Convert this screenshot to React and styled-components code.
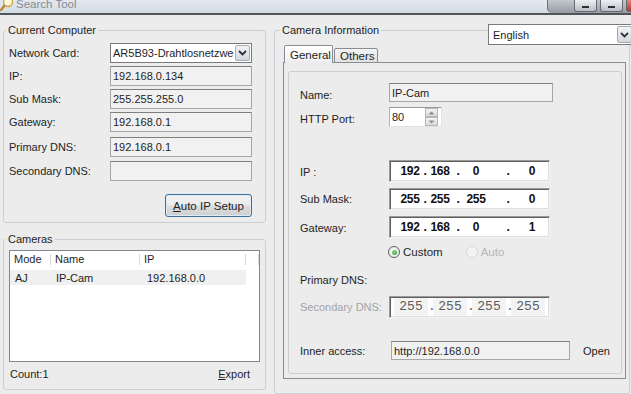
import React from "react"
import styled, { createGlobalStyle } from "styled-components"

const GlobalStyle = createGlobalStyle`
  html, body {
    margin: 0;
    padding: 0;
  }
  body {
    width: 631px;
    height: 394px;
    overflow: hidden;
    background: #ececec;
    font-family: "Liberation Sans", Arial, sans-serif;
    font-size: 11px;
    color: #1e1e1e;
  }
`

const Window = styled.div`
  position: relative;
  width: 631px;
  height: 394px;
  display: flex;
  flex-direction: column;
  background: #ececec;
  overflow: hidden;
`

const TitleBar = styled.div`
  flex: none;
  height: 13px;
  display: flex;
  align-items: flex-start;
  background: linear-gradient(#e4e9ef, #d3dbe4);
  border-bottom: 2px solid #505459;
  overflow: hidden;
`

const TitleIcon = styled.svg`
  flex: none;
  width: 14px;
  height: 12px;
  margin-right: 2px;
`

const TitleText = styled.span`
  margin-top: -2px;
  font-size: 11.5px;
  line-height: 12px;
  color: #848b93;
`

const Spacer = styled.div`
  flex: 1;
`

const CaptionTray = styled.div`
  flex: none;
  width: 84px;
  height: 13px;
  box-sizing: border-box;
  padding-left: 26px;
  display: flex;
  gap: 3px;
  background: linear-gradient(#c4c8cd, #959ba2);
  border-left: 1px solid #6e737a;
  border-bottom-left-radius: 5px;
`

const CaptionButton = styled.div`
  flex: none;
  box-sizing: border-box;
  width: ${p => p.$w}px;
  height: 12px;
  display: flex;
  align-items: flex-end;
  justify-content: center;
  padding-bottom: 3px;
  border: 1px solid #666b72;
  border-top: none;
  border-radius: 0 0 3px 3px;
  background: ${p => p.$close
    ? "linear-gradient(#d98a80, #b8382c)"
    : "linear-gradient(#eef0f2, #b9bec5)"};
`

const Dash = styled.div`
  width: 7px;
  height: 2px;
  background: #2c2f33;
`

const Body = styled.div`
  flex: 1;
  display: flex;
  gap: 8px;
  padding: 9px 0 0 3px;
`

const LeftColumn = styled.div`
  width: 263px;
  display: flex;
  flex-direction: column;
  gap: 10px;
`

const Group = styled.fieldset`
  margin: 0;
  min-width: 0;
  box-sizing: border-box;
  width: ${p => p.$w}px;
  border: 1px solid #c9cfd5;
  border-radius: 3px;
  padding: ${p => p.$pad};
  position: relative;
`

const Legend = styled.legend`
  margin-left: -3px;
  padding: 0 2px;
  font-size: 11px;
  line-height: 13px;
`

const Row = styled.div`
  display: flex;
  align-items: center;
  height: ${p => p.$h || 20}px;
  margin-top: ${p => p.$mt || 0}px;
`

const Label = styled.div`
  flex: none;
  width: ${p => p.$w}px;
  padding-top: ${p => p.$dy || 0}px;
  color: ${p => (p.$muted ? "#a3a3a3" : "#1e1e1e")};
  white-space: nowrap;
`

const TextBox = styled.div`
  flex: none;
  box-sizing: border-box;
  width: ${p => p.$w}px;
  height: ${p => p.$h || 20}px;
  margin-left: ${p => p.$ml || 0}px;
  padding-left: 2px;
  display: flex;
  align-items: center;
  background: #f1f1f1;
  border: 1px solid #a6a6a6;
  border-top-color: #7e7e7e;
  white-space: nowrap;
  overflow: hidden;
`

const Combo = styled.div`
  flex: none;
  box-sizing: border-box;
  width: ${p => p.$w}px;
  height: ${p => p.$h || 20}px;
  display: flex;
  align-items: stretch;
  background: #fff;
  border: 1px solid #7a7a7a;
`

const ComboText = styled.div`
  flex: 1;
  min-width: 0;
  display: flex;
  align-items: center;
  padding-left: ${p => p.$pl || 2}px;
  white-space: nowrap;
  overflow: hidden;
`

const ComboButton = styled.div`
  flex: none;
  width: 15px;
  margin: 1px;
  display: flex;
  align-items: center;
  justify-content: center;
  box-sizing: border-box;
  border: 1px solid #a7adb5;
  border-radius: 2px;
  background: linear-gradient(#f1f3f5, #d4d8de);
`

const LanguageCombo = styled(Combo)`
  position: absolute;
  top: -13px;
  left: 213px;
`

const PushButton = styled.div`
  box-sizing: border-box;
  width: 87px;
  height: 23px;
  margin: 13px 0 0 156px;
  display: flex;
  align-items: center;
  justify-content: center;
  border: 1px solid #3d6f99;
  border-radius: 3px;
  box-shadow: inset 0 0 0 1px #d7ecf8;
  background: linear-gradient(#f3f3f3 0%, #ebebeb 48%, #dcdcdc 52%, #cfcfcf 100%);
  font-size: 11.5px;
`

const ListBox = styled.div`
  box-sizing: border-box;
  width: 251px;
  height: 112px;
  background: #fff;
  border: 1px solid #828790;
`

const ListHeader = styled.div`
  display: flex;
  align-items: center;
  height: 17px;
`

const HeaderCell = styled.div`
  flex: none;
  box-sizing: border-box;
  width: ${p => p.$w}px;
  height: 11px;
  line-height: 11px;
  padding-left: ${p => p.$pl || 4}px;
  border-right: 1px solid #d9d9d9;
  white-space: nowrap;
`

const ListRow = styled.div`
  display: flex;
  align-items: center;
  width: 236px;
  height: 15px;
  margin-top: 2px;
  background: #f0f0f0;
`

const ListCell = styled.div`
  flex: none;
  box-sizing: border-box;
  width: ${p => p.$w}px;
  padding-left: ${p => p.$pl}px;
  white-space: nowrap;
`

const Footer = styled.div`
  display: flex;
  align-items: center;
  justify-content: space-between;
  height: 24px;
  padding: 0 11px 0 1px;
`

const Underline = styled.span`
  text-decoration: underline;
  text-underline-offset: 1px;
`

const Tabs = styled.div`
  display: flex;
  align-items: flex-end;
  height: 17px;
  margin-left: 1px;
  margin-bottom: -1px;
  position: relative;
  z-index: 1;
`

const Tab = styled.div`
  box-sizing: border-box;
  width: ${p => p.$w}px;
  height: ${p => (p.$active ? 18 : 15)}px;
  display: flex;
  align-items: center;
  padding-left: ${p => p.$pl}px;
  border: 1px solid #898c95;
  border-bottom: ${p => (p.$active ? "none" : "1px solid #898c95")};
  border-radius: 2px 2px 0 0;
  background: ${p => (p.$active
    ? "linear-gradient(#ffffff 0%, #f6f6f6 70%, #ececec 100%)"
    : "linear-gradient(#f4f4f4, #e1e1e1)")};
  margin-left: ${p => (p.$active ? 0 : 1)}px;
  font-size: 11.5px;
`

const TabPanel = styled.div`
  box-sizing: border-box;
  height: 317px;
  padding: 8px 3px 4px 4px;
  border: 1px solid #898c95;
  background: #ececec;
`

const InnerBox = styled.div`
  box-sizing: border-box;
  height: 100%;
  padding: 11px 0 0 11px;
  border: 1px solid #cdcdcd;
  border-radius: 3px;
`

const Spinner = styled.div`
  flex: none;
  box-sizing: border-box;
  width: 53px;
  height: 20px;
  display: flex;
  align-items: center;
  background: #fff;
  border: 1px solid #e2e2e2;
  border-top-color: #9a9a9a;
  border-left-color: #b3b3b3;
  padding-left: 2px;
`

const SpinText = styled.div`
  flex: 1;
`

const SpinButtons = styled.div`
  flex: none;
  width: 13px;
  height: 18px;
  margin-right: 3px;
  display: flex;
  flex-direction: column;
`

const SpinHalf = styled.div`
  flex: 1;
  display: flex;
  align-items: center;
  justify-content: center;
  box-sizing: border-box;
  border: 1px solid #b4b7bb;
  background: linear-gradient(#f3f3f3, #dadada);
`

const IpBox = styled.div`
  flex: none;
  box-sizing: border-box;
  width: 161px;
  height: 22px;
  display: flex;
  align-items: center;
  padding-left: ${p => p.$pl}px;
  background: #fff;
  border: 1px solid;
  border-color: #9a9a9a #f4f4f4 #f4f4f4 #9a9a9a;
  box-shadow: inset 1px 1px 0 #5f5f5f, inset -1px -1px 0 #dedede;
`

const Octet = styled.span`
  flex: none;
  width: ${p => p.$w}px;
  text-align: center;
  font-family: "Liberation Sans", Arial, sans-serif;
  font-weight: bold;
  font-size: 12px;
  letter-spacing: -0.4px;
  color: #111;
  white-space: pre;
`

const DimOctet = styled.span`
  flex: none;
  width: ${p => p.$w}px;
  height: 18px;
  line-height: 18px;
  text-align: center;
  font-family: "Liberation Mono", "Courier New", monospace;
  font-size: 13px;
  color: #5c5c5c;
  background: ${p => (p.$dot ? "#fff" : "#f3f3f3")};
`

const RadioItem = styled.div`
  display: flex;
  align-items: center;
  gap: 3px;
  margin-left: ${p => p.$ml || 0}px;
  color: ${p => (p.$disabled ? "#b5b5b5" : "#1e1e1e")};
  font-size: 11.5px;
`

const RadioCircle = styled.div`
  box-sizing: border-box;
  width: 12px;
  height: 12px;
  border-radius: 50%;
  display: flex;
  align-items: center;
  justify-content: center;
  border: 1px solid ${p => (p.$disabled ? "#dadada" : "#5c5f63")};
  background: ${p => (p.$disabled ? "#f3f3f3" : "radial-gradient(#ffffff, #e4e4e4)")};
`

const RadioDot = styled.div`
  width: 5px;
  height: 5px;
  border-radius: 50%;
  background: radial-gradient(circle at 40% 40%, #8ee08e, #2b8a2b);
`

const OpenLink = styled.span`
  margin-left: 13px;
`

function Chevron() {
  return (
    <svg width="9" height="6" viewBox="0 0 9 6">
      <path d="M1 1 L4.5 4.5 L8 1" fill="none" stroke="#2e3338" strokeWidth="1.8" />
    </svg>
  )
}

function Arrow({ up }) {
  return (
    <svg width="7" height="4" viewBox="0 0 7 4">
      <path d={up ? "M0.5 3.5 L3.5 0.5 L6.5 3.5 Z" : "M0.5 0.5 L3.5 3.5 L6.5 0.5 Z"} fill="#8b8f94" />
    </svg>
  )
}

const IP_SLOTS = [26, 4, 26, 10, 26, 38, 10]

function IpField({ parts }) {
  const tokens = [parts[0], ".", parts[1], ".", parts[2], ".", parts[3]]
  return (
    <IpBox $pl={7}>
      {tokens.map((t, i) => (
        <Octet key={i} $w={IP_SLOTS[i]}>{t}</Octet>
      ))}
    </IpBox>
  )
}

function DimIpField({ parts }) {
  const out = []
  parts.forEach((p, i) => {
    if (i > 0) out.push(<DimOctet key={"d" + i} $w={5} $dot>.</DimOctet>)
    out.push(<DimOctet key={i} $w={34}>{p}</DimOctet>)
  })
  return <IpBox $pl={4}>{out}</IpBox>
}

const computerRows = [
  { label: "IP:", value: "192.168.0.134", mt: 3 },
  { label: "Sub Mask:", value: "255.255.255.0", mt: 3 },
  { label: "Gateway:", value: "192.168.0.1", mt: 3 },
  { label: "Primary DNS:", value: "192.168.0.1", mt: 5 },
  { label: "Secondary DNS:", value: "", mt: 4 },
]

export default function App() {
  return (
    <Window>
      <GlobalStyle />
      <TitleBar>
        <TitleIcon viewBox="0 0 14 12">
          <circle cx="8" cy="2" r="4.5" fill="#fdf6d8" stroke="#c9a53c" strokeWidth="1.3" />
          <path d="M4.5 5.5 L1 10" stroke="#b8862a" strokeWidth="2.2" strokeLinecap="round" />
        </TitleIcon>
        <TitleText>Search Tool</TitleText>
        <Spacer />
        <CaptionTray>
          <CaptionButton $w={23}><Dash /></CaptionButton>
          <CaptionButton $w={23}><Dash /></CaptionButton>
          <CaptionButton $w={12} $close />
        </CaptionTray>
      </TitleBar>

      <Body>
        <LeftColumn>
          <Group $w={263} $pad="6px 13px 5px 5px">
            <Legend>Current Computer</Legend>
            <Row>
              <Label $w={101}>Network Card:</Label>
              <Combo $w={142}>
                <ComboText $pl={2}>AR5B93-Drahtlosnetzwerkadapter</ComboText>
                <ComboButton><Chevron /></ComboButton>
              </Combo>
            </Row>
            {computerRows.map(r => (
              <Row key={r.label} $mt={r.mt}>
                <Label $w={101}>{r.label}</Label>
                <TextBox $w={142}>{r.value}</TextBox>
              </Row>
            ))}
            <PushButton>
              <span><Underline>A</Underline>uto IP Setup</span>
            </PushButton>
          </Group>

          <Group $w={263} $pad="4px 4px 3px 5px">
            <Legend>Cameras</Legend>
            <ListBox>
              <ListHeader>
                <HeaderCell $w={41}>Mode</HeaderCell>
                <HeaderCell $w={89}>Name</HeaderCell>
                <HeaderCell $w={106}>IP</HeaderCell>
                <HeaderCell $w={13} />
              </ListHeader>
              <ListRow>
                <ListCell $w={41} $pl={5}>AJ</ListCell>
                <ListCell $w={89} $pl={5}>IP-Cam</ListCell>
                <ListCell $w={106} $pl={7}>192.168.0.0</ListCell>
              </ListRow>
            </ListBox>
            <Footer>
              <span>Count:1</span>
              <span><Underline>E</Underline>xport</span>
            </Footer>
          </Group>
        </LeftColumn>

        <Group $w={356} $pad="9px 3px 8px 8px">
          <Legend>Camera Information</Legend>
          <LanguageCombo $w={146} $h={21}>
            <ComboText $pl={4}>English</ComboText>
            <ComboButton><Chevron /></ComboButton>
          </LanguageCombo>
          <Tabs>
            <Tab $w={49} $pl={5} $active>General</Tab>
            <Tab $w={44} $pl={5}>Others</Tab>
          </Tabs>
          <TabPanel>
            <InnerBox>
              <Row $h={19}>
                <Label $w={89} $dy={5}>Name:</Label>
                <TextBox $w={164} $h={19}>IP-Cam</TextBox>
              </Row>
              <Row $mt={5}>
                <Label $w={89} $dy={3}>HTTP Port:</Label>
                <Spinner>
                  <SpinText>80</SpinText>
                  <SpinButtons>
                    <SpinHalf><Arrow up /></SpinHalf>
                    <SpinHalf><Arrow /></SpinHalf>
                  </SpinButtons>
                </Spinner>
              </Row>
              <Row $mt={33} $h={22}>
                <Label $w={89} $dy={2}>IP :</Label>
                <IpField parts={["192", "168", "0", "0"]} />
              </Row>
              <Row $mt={6} $h={22}>
                <Label $w={89}>Sub Mask:</Label>
                <IpField parts={["255", "255", "255", "0"]} />
              </Row>
              <Row $mt={6} $h={22}>
                <Label $w={89} $dy={2}>Gateway:</Label>
                <IpField parts={["192", "168", "0", "1"]} />
              </Row>
              <Row $mt={7} $h={14}>
                <Label $w={88} />
                <RadioItem>
                  <RadioCircle><RadioDot /></RadioCircle>
                  Custom
                </RadioItem>
                <RadioItem $ml={23} $disabled>
                  <RadioCircle $disabled />
                  Auto
                </RadioItem>
              </Row>
              <Row $mt={13} $h={16}>
                <Label $w={89}>Primary DNS:</Label>
              </Row>
              <Row $mt={8} $h={22}>
                <Label $w={89} $muted>Secondary DNS:</Label>
                <DimIpField parts={["255", "255", "255", "255"]} />
              </Row>
              <Row $mt={23} $h={19}>
                <Label $w={89}>Inner access:</Label>
                <TextBox $w={179} $h={19} $ml={2}>http://192.168.0.0</TextBox>
                <OpenLink>Open</OpenLink>
              </Row>
            </InnerBox>
          </TabPanel>
        </Group>
      </Body>
    </Window>
  )
}
